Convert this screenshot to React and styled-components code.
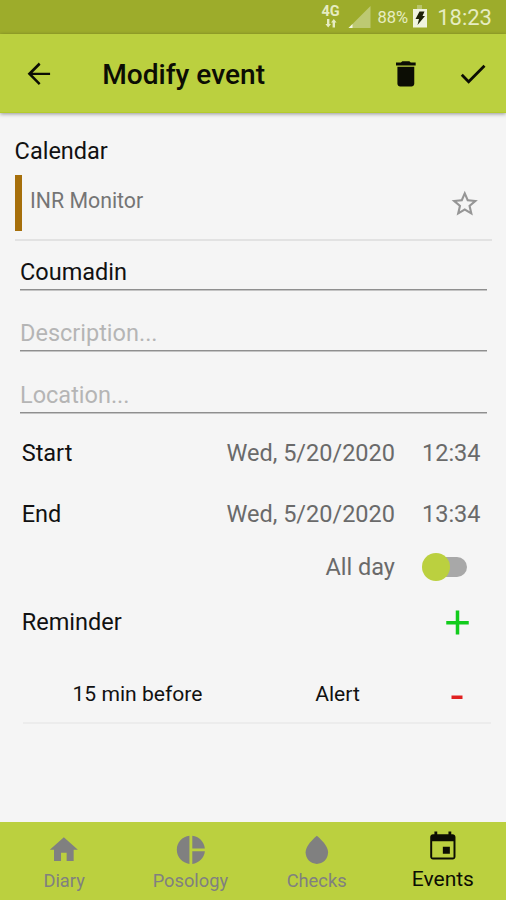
import React from 'react';
import styled, { createGlobalStyle } from 'styled-components'

const GlobalStyle = createGlobalStyle`
    * {
        box-sizing: border-box;
    }
    body {
        margin: 0;
        background-color: #f5f5f5;
        font-family: Roboto, "Liberation Sans", sans-serif;
    }
`

const Screen = styled.div`
    display: flex;
    flex-direction: column;
    width: 506px;
    height: 900px;
    overflow: hidden;
    background-color: #f5f5f5;
    color: #111;
    white-space: nowrap;
`

const StatusBar = styled.div`
    display: flex;
    justify-content: flex-end;
    flex: none;
    height: 34px;
    padding-right: 14px;
    background-color: #9dac2b;
    color: #e6ecc2;
`

const Network = styled.div`
    display: flex;
    flex-direction: column;
    align-items: center;
    width: 20px;
    padding-top: 4px;
    font-size: 14.5px;
    font-weight: 700;
    line-height: 15px;
`

const Battery = styled.div`
    margin-left: 7px;
    font-size: 16.5px;
    line-height: 36px;
`

const Clock = styled.div`
    margin-left: 9px;
    font-size: 22px;
    line-height: 36px;
`

const StatusIcon = styled.svg`
    display: block;
    flex: none;
    margin-left: ${props => props.$left || 0}px;
`

const Header = styled.header`
    display: flex;
    align-items: center;
    flex: none;
    height: 79px;
    padding: 1px 16px 0 22px;
    background-color: #bbd03f;
    border-bottom: 1px solid #b4cb2c;
    box-shadow: 0 1px 4px rgba(0, 0, 0, 0.4);
    color: #0c0d04;
`

const Title = styled.h1`
    flex: 1;
    margin: 0 0 0 46.5px;
    padding-top: 2px;
    font-size: 28.1px;
    font-weight: 500;
`

const Actions = styled.div`
    display: flex;
    gap: 34px;
    padding-top: 1px;
`

const Icon = styled.svg`
    display: block;
    flex: none;
    width: ${props => props.$size || 33.7}px;
    height: ${props => props.$size || 33.7}px;
    fill: currentColor;
`

const Content = styled.main`
    flex: 1;
`

const SectionLabel = styled.div`
    padding: 14px 0 0 14.6px;
    font-size: 23.5px;
    line-height: 48px;
`

const CalendarCard = styled.div`
    margin: 0 14px 0 14.5px;
    padding-bottom: 8px;
    border-bottom: 2px solid #e2e2e2;
`

const CalendarRow = styled.div`
    display: flex;
    align-items: center;
    height: 56px;
    padding-right: 12px;
    border-left: 7px solid #a66f0b;
    color: #757575;
`

const CalendarName = styled.div`
    flex: 1;
    align-self: flex-start;
    padding-left: 8.5px;
    font-size: 21.3px;
    line-height: 52px;
`

const Star = styled(Icon)`
    margin-top: 1px;
    color: #969696;
`

const Field = styled.div`
    display: flex;
    align-items: flex-end;
    height: ${props => props.$height}px;
    margin: 0 19px 0 20px;
    border-bottom: 1px solid #8f8f8f;
    box-shadow: 0 1px 0 #c4c4c4;
    color: ${props => props.$empty ? '#b5b5b5' : '#111'};
    font-size: 23.5px;
    line-height: 33px;
`

const Schedule = styled.div`
    padding-top: 9px;
`

const Row = styled.div`
    display: grid;
    grid-template-columns: 1fr auto 84px;
    align-items: center;
    column-gap: 27px;
    height: ${props => props.$height}px;
    padding-left: 21.7px;
    font-size: 23.5px;
`

const Value = styled.div`
    color: #6a6a6a;
`

const Switch = styled.div`
    display: flex;
    align-items: center;
    width: 45px;
    height: 20px;
    border-radius: 10px;
    background: linear-gradient(to right, transparent 14px, #a8a8a8 14px);
`

const Thumb = styled.div`
    width: 28px;
    height: 28px;
    border-radius: 50%;
    background-color: #bbd03f;
`

const ReminderRow = styled.div`
    display: grid;
    grid-template-columns: 229px 1fr 68px;
    align-items: center;
    height: 69px;
    margin: 0 15px 0 23px;
    padding-top: 10px;
    border-bottom: 2px solid #ececec;
    font-size: 21.1px;
    text-align: center;
`

const AddIcon = styled(Icon)`
    margin: 2px 0 0 23px;
    color: #12cc1c;
`

const RemoveIcon = styled(Icon)`
    justify-self: center;
    margin-top: 6px;
    color: #e02020;
`

const BottomNav = styled.nav`
    display: grid;
    grid-template-columns: repeat(4, 1fr);
    flex: none;
    height: 78px;
    padding-left: 1px;
    background-color: #bbd03f;
`

const Tab = styled.div`
    display: flex;
    flex-direction: column;
    align-items: center;
    padding-top: ${props => props.$active ? 7.5 : 11}px;
    color: ${props => props.$active ? '#0c0d04' : '#808080'};
    font-size: ${props => props.$active ? 21 : 18.3}px;
    line-height: ${props => props.$active ? 33 : 28}px;
`

const tabs = [
    { label: 'Diary', path: 'M10 20v-6h4v6h5v-8h3L12 3 2 12h3v8z' },
    { label: 'Posology', path: 'M11 2v20c-5.07-.5-9-4.79-9-10s3.93-9.5 9-10zm2.03 0v8.99H22c-.47-4.74-4.24-8.52-8.97-8.99zm0 11.01V22c4.74-.47 8.5-4.25 8.97-8.99h-8.97z' },
    { label: 'Checks', path: 'M12 2c-5.33 4.55-8 8.48-8 11.8 0 4.98 3.8 8.2 8 8.2s8-3.22 8-8.2c0-3.32-2.67-7.25-8-11.8z' },
    { label: 'Events', active: true, path: 'M17 12h-5v5h5v-5zM16 1v2H8V1H6v2H5c-1.11 0-1.99.9-1.99 2L3 19c0 1.1.89 2 2 2h14c1.1 0 2-.9 2-2V5c0-1.1-.9-2-2-2h-1V1h-2zm3.600 18.600H4.400V8h15.200v11.600z' },
]

const times = [
    { label: 'Start', date: 'Wed, 5/20/2020', time: '12:34' },
    { label: 'End', date: 'Wed, 5/20/2020', time: '13:34' },
]

const Status = () => {
    return(
        <StatusBar>
            <Network>
                4G
                <svg width="12" height="9" viewBox="0 0 12 9" fill="currentColor"><path d="M2 0h2.4v5H6L3.2 8.6.4 5H2zM7.6 8.6H10v-5h1.6L8.8 0 6 3.6h1.6z" /></svg>
            </Network>
            <StatusIcon $left={7} width="23" height="34">
                <path d="M22.5 6v22H.5z" fill="#bdc973" />
                <path d="M4.5 24v4H.5z" fill="#f4f7e4" />
            </StatusIcon>
            <Battery>88%</Battery>
            <StatusIcon $left={4} width="16" height="34">
                <path d="M5 5h5v4H5z" fill="#b8c46c" />
                <path d="M1 9h14v18.5H1z" fill="#f0f4de" />
                <path d="M7.5 11.5h5L10.5 16H13l-7.5 9 1.500-6H3.500z" fill="#1c2005" />
            </StatusIcon>
            <Clock>18:23</Clock>
        </StatusBar>
    )
}

const App = () => {
    return(
        <Screen>
            <GlobalStyle />
            <Status />
            <Header>
                <Icon viewBox="0 0 24 24"><path d="M20 11.200H7.500l5.700-5.700L12 4l-8 8 8 8 1.200-1.300L7.500 12.800H20z" /></Icon>
                <Title>Modify event</Title>
                <Actions>
                    <Icon viewBox="0 0 24 24"><path d="M6 19c0 1.1.9 2 2 2h8c1.1 0 2-.9 2-2V7H6v12zM19 4h-3.5l-1-1h-5l-1 1H5v2h14V4z" /></Icon>
                    <Icon viewBox="0 0 24 24"><path d="M9 16.17L4.83 12l-1.42 1.41L9 19 21 7l-1.41-1.41z" /></Icon>
                </Actions>
            </Header>
            <Content>
                <SectionLabel>Calendar</SectionLabel>
                <CalendarCard>
                    <CalendarRow>
                        <CalendarName>INR Monitor</CalendarName>
                        <Star $size={31.5} viewBox="0 0 24 24"><path d="M22 9.24l-7.19-.62L12 2 9.19 8.63 2 9.24l5.46 4.73L5.82 21 12 17.27 18.18 21l-1.63-7.03L22 9.24zM12 15.400l-3.760 2.270 1-4.280-3.320-2.880 4.380-.38L12 6.100l1.710 4.040 4.380.38-3.320 2.880 1 4.280L12 15.400z" /></Star>
                    </CalendarRow>
                </CalendarCard>
                <Field $height={49}>Coumadin</Field>
                <Field $height={61} $empty>Description...</Field>
                <Field $height={62} $empty>Location...</Field>
                <Schedule>
                    {times.map(item => {
                        return <Row key={item.label} $height={61.5}>
                            <div>{item.label}</div>
                            <Value>{item.date}</Value>
                            <Value>{item.time}</Value>
                        </Row>
                    })}
                    <Row $height={43}>
                        <div></div>
                        <Value>All day</Value>
                        <Switch><Thumb /></Switch>
                    </Row>
                    <Row $height={67}>
                        <div>Reminder</div>
                        <div></div>
                        <AddIcon $size={25} viewBox="0 0 25 25"><path d="M10.75.5h3.5V11h9.500v3.500h-9.500v10h-3.500v-10H1.250V11h9.500z" /></AddIcon>
                    </Row>
                </Schedule>
                <ReminderRow>
                    <div>15 min before</div>
                    <div>Alert</div>
                    <RemoveIcon $size={12} viewBox="0 0 12 12"><path d="M.5 4.5h11V8H.5z" /></RemoveIcon>
                </ReminderRow>
            </Content>
            <BottomNav>
                {tabs.map(tab => {
                    return <Tab key={tab.label} $active={tab.active}>
                        <Icon viewBox="0 0 24 24"><path d={tab.path} /></Icon>
                        {tab.label}
                    </Tab>
                })}
            </BottomNav>
        </Screen>
    )
}

export default App
